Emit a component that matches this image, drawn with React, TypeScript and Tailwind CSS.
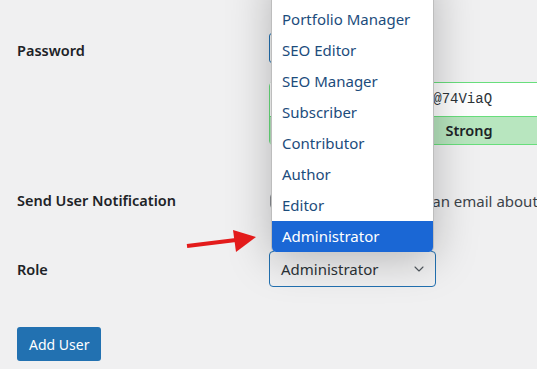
import React from "react";
import { ChevronDown } from "lucide-react";

const roles = [
  "Shop Manager",
  "Portfolio Manager",
  "SEO Editor",
  "SEO Manager",
  "Subscriber",
  "Contributor",
  "Author",
  "Editor",
  "Administrator",
];

const App: React.FC = () => {
  return (
    <div className="relative w-[537px] h-[369px] overflow-hidden bg-[#f0f0f1] text-[#1d2327] font-['Noto_Sans','Segoe_UI',sans-serif]">
      {/* Password */}
      <div className="flex mt-[33px]">
        <div className="w-[269px] shrink-0 pl-[17px] pt-[7px] text-[14.5px] leading-[20px] font-semibold">Password</div>
        <div className="flex flex-col">
          <button className="h-[30px] w-[150px] px-[10px] rounded-[3px] border border-[#2271b1] bg-[#f6f7f7] text-[13px] text-[#2271b1] text-left">
            Generate password
          </button>
          <div className="mt-[19px] w-[400px] border border-[#68de7c] rounded-[4px]">
            <div className="h-[33px] bg-white pl-[12px] flex items-center font-['Liberation_Mono',monospace] text-[14px] text-[#2c3338] whitespace-nowrap">
              xK9!mQ2#rT5&amp;pL8^wZ@74ViaQ
            </div>
            <div className="h-[28px] border-t border-[#68de7c] bg-[#b8e6bf] flex items-center justify-center text-[14.5px] font-semibold">
              Strong
            </div>
          </div>
        </div>
      </div>

      {/* Send User Notification */}
      <div className="flex items-center h-[20px] mt-[46px]">
        <div className="w-[269px] shrink-0 pl-[17px] text-[14.5px] font-semibold">Send User Notification</div>
        <div className="flex items-center gap-[12px] whitespace-nowrap text-[15px] text-[#3c434a]">
          <span className="ml-[1px] w-[16px] h-[16px] rounded-[4px] border border-[#8c8f94] bg-white" />
          <span>Send the new user an email about their account.</span>
        </div>
      </div>

      {/* Role */}
      <div className="flex items-center mt-[40px]">
        <div className="w-[269px] shrink-0 pl-[17px] pt-[1px] text-[14.5px] font-semibold">Role</div>
        <div className="flex items-center justify-between w-[167px] h-[36px] pl-[11px] pr-[8px] border border-[#2271b1] rounded-[4px] bg-[#f0f0f1] text-[15px] text-[#2c3338]">
          <span>Administrator</span>
          <ChevronDown size={16} strokeWidth={1.6} className="text-[#50575e]" />
        </div>
      </div>

      <button className="ml-[17px] mt-[40px] h-[34px] px-[12px] rounded-[3px] bg-[#2271b1] text-white text-[14px]">
        Add User
      </button>

      {/* open select list */}
      <ul className="absolute left-[271px] top-[-27px] w-[163px] bg-white border-l border-r border-[#bdbdbd] rounded-b-[5px] overflow-hidden shadow-[0_6px_44px_rgba(0,0,0,0.25)]">
        {roles.map((r) => (
          <li
            key={r}
            className={
              r === "Administrator"
                ? "h-[31px] pl-[10px] flex items-center text-[15px] bg-[#1a67d5] text-white"
                : "h-[31px] pl-[10px] flex items-center text-[15px] text-[#1c4c7c]"
            }
          >
            {r}
          </li>
        ))}
      </ul>

      {/* annotation arrow */}
      <svg className="absolute left-[180px] top-[225px]" width="80" height="32" viewBox="0 0 80 32">
        <line x1="7" y1="21" x2="56" y2="15" stroke="#e31b1b" strokeWidth="4" />
        <polygon points="53,5 76,12 56,27" fill="#e31b1b" />
      </svg>
    </div>
  );
};

export default App;
